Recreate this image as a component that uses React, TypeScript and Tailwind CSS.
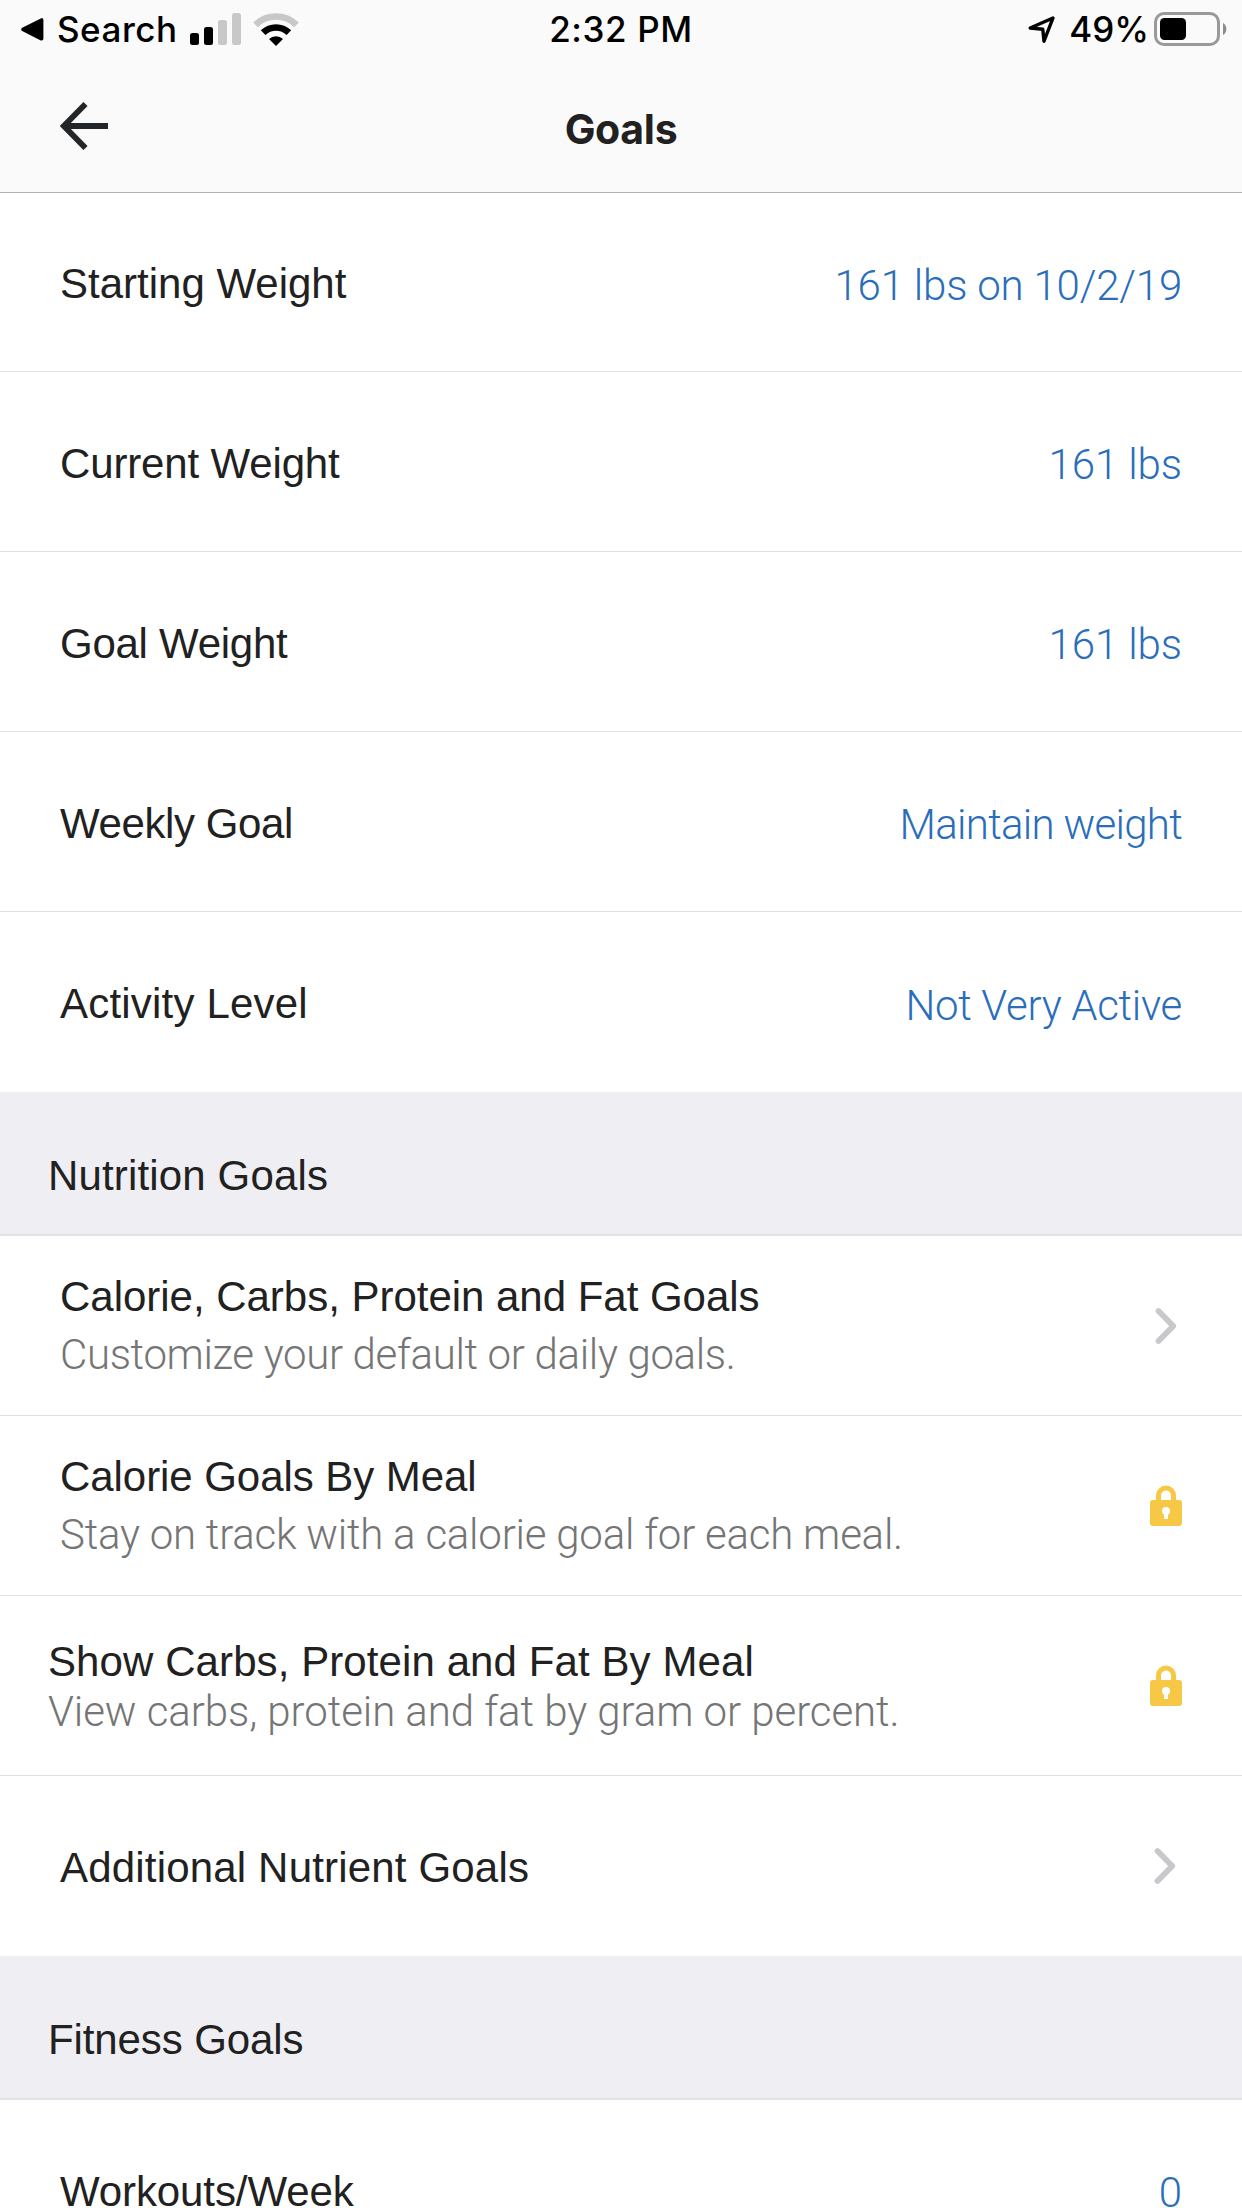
import type { ReactNode } from "react";

const weightRows = [
  {
    label: "Starting Weight",
    labelTracking: "",
    value: "161 lbs on 10/2/19",
    valueTracking: "tracking-[-0.2px]",
  },
  {
    label: "Current Weight",
    labelTracking: "tracking-[-0.15px]",
    value: "161 lbs",
    valueTracking: "tracking-[-0.1px]",
  },
  {
    label: "Goal Weight",
    labelTracking: "tracking-[-0.27px]",
    value: "161 lbs",
    valueTracking: "tracking-[-0.1px]",
  },
  {
    label: "Weekly Goal",
    labelTracking: "tracking-[-0.4px]",
    value: "Maintain weight",
    valueTracking: "tracking-[-0.7px]",
  },
  {
    label: "Activity Level",
    labelTracking: "tracking-[0.2px]",
    value: "Not Very Active",
    valueTracking: "tracking-[-0.3px]",
  },
];

export default function App() {
  return (
    <div className="flex h-[2208px] w-[1242px] flex-col overflow-hidden bg-white font-['Liberation_Sans',sans-serif] text-[42px] text-[#212121]">
      <header className="h-[193px] shrink-0 border-b border-[#b0b0b0] bg-[#fafafa]">
        <StatusBar />
        <NavBar title="Goals" />
      </header>

      {weightRows.map((row, i) => (
        <ValueRow
          key={row.label}
          {...row}
          height={i === 0 ? "h-[179px]" : "h-[180px]"}
          last={i === weightRows.length - 1}
        />
      ))}

      <SectionHeader title="Nutrition Goals" tracking="tracking-[0.15px]" />
      <LinkRow
        title="Calorie, Carbs, Protein and Fat Goals"
        titleTracking="tracking-[-0.02px]"
        subtitle="Customize your default or daily goals."
        subtitleTracking="tracking-[-0.34px]"
        icon={<Chevron />}
      />
      <LinkRow
        title="Calorie Goals By Meal"
        titleTracking="tracking-[-0.06px]"
        subtitle="Stay on track with a calorie goal for each meal."
        subtitleTracking="tracking-[-0.23px]"
        icon={<Lock />}
      />
      <LinkRow
        title="Show Carbs, Protein and Fat By Meal"
        titleTracking="tracking-[0.09px]"
        subtitle="View carbs, protein and fat by gram or percent."
        subtitleTracking="tracking-[-0.07px]"
        icon={<Lock />}
        compact
      />
      <div className="flex h-[180px] shrink-0 items-center justify-between pl-[60px] pr-[66px]">
        <span className="pt-[3px] tracking-[0.18px]">Additional Nutrient Goals</span>
        <Chevron />
      </div>

      <SectionHeader title="Fitness Goals" tracking="tracking-[-0.1px]" />
      <ValueRow
        label="Workouts/Week"
        labelTracking="tracking-[-0.1px]"
        value="0"
        valueTracking=""
        height="h-[180px]"
      />
    </div>
  );
}

function StatusBar() {
  return (
    <div className="grid h-[60px] grid-cols-[1fr_auto_1fr] items-start font-[Inter,sans-serif] text-[35px] font-medium leading-[58px] text-black">
      <div className="flex pl-[20px]">
        <svg className="mt-[17px] h-[25px] w-[25px]" viewBox="0 0 25 25">
          <path
            d="M3 12.3 L21.6 3 V21.8 Z"
            fill="#000"
            stroke="#000"
            strokeWidth="3.6"
            strokeLinejoin="round"
          />
        </svg>
        <span className="ml-[12px] w-[120px] whitespace-nowrap tracking-[0.5px]">Search</span>
        <svg className="ml-[13px] mt-[13px] h-[32px] w-[51px]" viewBox="0 0 51 32">
          <rect x="0" y="20" width="9" height="12" rx="2.5" />
          <rect x="14" y="14" width="9" height="18" rx="2.5" />
          <rect x="28" y="7" width="9" height="25" rx="2.5" fill="#c8c8c8" />
          <rect x="42" y="0" width="9" height="32" rx="2.5" fill="#c8c8c8" />
        </svg>
        <svg className="ml-[12px] mt-[13px] h-[34px] w-[46px]" viewBox="0 0 46 34" fill="none">
          <path d="M2.5 11.8 A29.5 29.5 0 0 1 43.5 11.8" stroke="#c8c8c8" strokeWidth="6.6" />
          <path d="M10.1 19.7 A18.5 18.5 0 0 1 35.9 19.7" stroke="#000" strokeWidth="6.6" />
          <path d="M23 33 L16 26 A10 10 0 0 1 30 26 Z" fill="#000" />
        </svg>
      </div>
      <span className="whitespace-nowrap tracking-[0.6px]">2:32 PM</span>
      <div className="flex justify-end pr-[15px]">
        <svg className="mt-[15px] h-[29px] w-[29px]" viewBox="0 0 29 29" fill="none">
          <path
            d="M26 3 L3.2 13 L15.8 14.3 L17 26.2 Z"
            stroke="#000"
            strokeWidth="3.4"
            strokeLinejoin="round"
          />
        </svg>
        <span className="ml-[13px] whitespace-nowrap">49%</span>
        <svg className="ml-[5px] mt-[12px] h-[34px] w-[73px]" viewBox="0 0 73 34">
          <rect x="1.5" y="1.5" width="63" height="31" rx="8.5" fill="none" stroke="#999" strokeWidth="3" />
          <rect x="6" y="6" width="26" height="22" rx="4.5" />
          <path d="M69 11 A7 7 0 0 1 69 23 Z" fill="#8c8c8c" />
        </svg>
      </div>
    </div>
  );
}

function NavBar({ title }: { title: string }) {
  return (
    <div className="grid h-[132px] grid-cols-[1fr_auto_1fr] items-center px-[60px]">
      <svg className="h-[48px] w-[48px]" viewBox="0 0 48 48" fill="none">
        <path d="M25.5 2 L3.9 24 L25.5 46 M4 24 H48" stroke="#222628" strokeWidth="5.8" />
      </svg>
      <h1 className="pt-[6px] font-[Inter,sans-serif] text-[41px] font-bold leading-[48px] tracking-[-0.3px]">
        {title}
      </h1>
    </div>
  );
}

interface ValueRowProps {
  label: string;
  labelTracking: string;
  value: string;
  valueTracking: string;
  height: string;
  last?: boolean;
}

function ValueRow({ label, labelTracking, value, valueTracking, height, last }: ValueRowProps) {
  return (
    <div
      className={`flex shrink-0 items-center justify-between px-[60px] ${height} ${
        last ? "" : "border-b border-[#e0e0e0]"
      }`}
    >
      <span className={`pt-[3px] ${labelTracking}`}>{label}</span>
      <span
        className={`pt-[6px] font-[Roboto,sans-serif] font-light text-[#2a6ebb] ${valueTracking}`}
      >
        {value}
      </span>
    </div>
  );
}

function SectionHeader({ title, tracking }: { title: string; tracking: string }) {
  return (
    <h2
      className={`h-[144px] shrink-0 border-b-2 border-[#e2e2e4] bg-[#efeef3] pl-[48px] pt-[60px] leading-[48px] ${tracking}`}
    >
      {title}
    </h2>
  );
}

interface LinkRowProps {
  title: string;
  titleTracking: string;
  subtitle: string;
  subtitleTracking: string;
  icon: ReactNode;
  compact?: boolean;
}

function LinkRow({ title, titleTracking, subtitle, subtitleTracking, icon, compact }: LinkRowProps) {
  return (
    <div
      className={`flex h-[180px] shrink-0 justify-between border-b border-[#e0e0e0] leading-[48px] ${
        compact ? "pl-[48px]" : "pl-[60px]"
      }`}
    >
      <div className={compact ? "space-y-[2px] pt-[42px]" : "space-y-[10px] pt-[37px]"}>
        <p className={titleTracking}>{title}</p>
        <p className={`font-[Roboto,sans-serif] font-light text-[#757575] ${subtitleTracking}`}>
          {subtitle}
        </p>
      </div>
      <div className="flex w-[92px] items-center">
        <div className="flex w-[32px] justify-center">{icon}</div>
      </div>
    </div>
  );
}

function Chevron() {
  return (
    <svg className="h-[38px] w-[22px]" viewBox="0 0 22 38" fill="none">
      <path
        d="M3.5 4 L18.2 19 L3.5 34"
        stroke="#c7c7cc"
        strokeWidth="5.8"
        strokeLinecap="round"
        strokeLinejoin="round"
      />
    </svg>
  );
}

function Lock() {
  return (
    <svg className="h-[42px] w-[32px]" viewBox="0 0 32 42">
      <path d="M8.5 17 V10.5 A7.5 7.5 0 0 1 23.5 10.5 V17" fill="none" stroke="#f7c845" strokeWidth="5" />
      <rect x="0" y="15" width="32" height="26" rx="3" fill="#f7c845" />
      <circle cx="16" cy="26" r="4" fill="#fff" />
      <rect x="14" y="27" width="4" height="7" fill="#fff" />
    </svg>
  );
}
